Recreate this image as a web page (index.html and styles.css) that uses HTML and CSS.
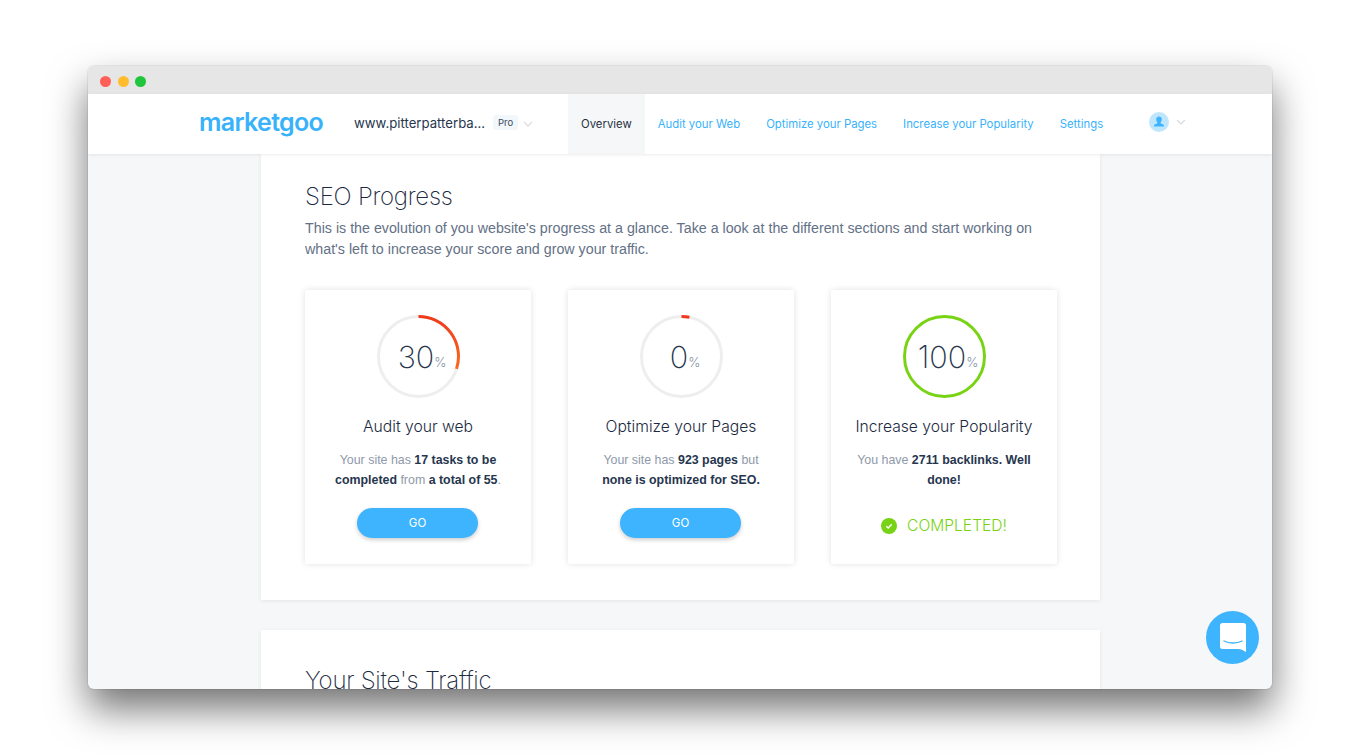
FILE: index.html
```html
<!DOCTYPE html>
<html>
<head>
    <meta charset="utf-8">
    <title>marketgoo</title>
    <link rel="stylesheet" href="styles.css">
</head>
<body>
<div class="window">
    <div class="titlebar">
        <span class="light red"></span>
        <span class="light yellow"></span>
        <span class="light green"></span>
    </div>
    <div class="nav">
        <div class="logo">marketgoo</div>
        <div class="site">www.pitterpatterba...</div>
        <span class="plan">Pro</span>
        <svg class="chev chev-site" viewBox="0 0 10 6"><path d="M1 1l4 4 4-4"/></svg>
        <div class="tabs">
            <a class="tab active">Overview</a>
            <a class="tab">Audit your Web</a>
            <a class="tab">Optimize your Pages</a>
            <a class="tab">Increase your Popularity</a>
            <a class="tab">Settings</a>
        </div>
        <div class="user">
            <svg class="avatar" viewBox="0 0 20 20">
                <circle cx="10" cy="10" r="10" fill="#bfe6fd"/>
                <path fill="#3db4fd" d="M10 4.600c-1.700 0-2.800 1.200-2.800 3 0 1.200.5 2.200 1.200 2.800v.9l-2.600 1.100c-.5.2-.8.7-.8 1.200v.8h10v-.8c0-.5-.3-1-.8-1.200l-2.600-1.100v-.9c.7-.6 1.200-1.600 1.200-2.800 0-1.800-1.100-3-2.800-3z"/>
            </svg>
            <svg class="chev" viewBox="0 0 10 6"><path d="M1 1l4 4 4-4"/></svg>
        </div>
    </div>
    <div class="page">
        <div class="panel">
            <h2>SEO Progress</h2>
            <p class="intro">This is the evolution of you website's progress at a glance. Take a look at the different sections and start working on what's left to increase your score and grow your traffic.</p>
            <div class="cards">
                <div class="card">
                    <div class="ring">
                        <svg viewBox="0 0 84 84">
                            <defs>
                                <linearGradient id="arc" x1="0" y1="0" x2="0" y2="1">
                                    <stop offset="0" stop-color="#ee3a1c"/>
                                    <stop offset="1" stop-color="#fb6a1e"/>
                                </linearGradient>
                            </defs>
                            <circle class="track" cx="42" cy="42" r="40.500"/>
                            <path class="arc" stroke="url(#arc)" d="M42 1.500A40.500 40.500 0 0 1 80.500 54.500"/>
                        </svg>
                        <div class="score">30<small>%</small></div>
                    </div>
                    <h3>Audit your web</h3>
                    <p class="desc">Your site has <b>17 tasks to be completed</b> from <b>a total of 55</b>.</p>
                    <a class="go">GO</a>
                </div>
                <div class="card">
                    <div class="ring">
                        <svg viewBox="0 0 84 84">
                            <circle class="track" cx="42" cy="42" r="40.500"/>
                            <path class="arc" stroke="#ee3a1c" d="M42 1.500A40.500 40.500 0 0 1 50 2.300"/>
                        </svg>
                        <div class="score">0<small>%</small></div>
                    </div>
                    <h3>Optimize your Pages</h3>
                    <p class="desc">Your site has <b>923 pages</b> but <b>none is optimized for SEO.</b></p>
                    <a class="go">GO</a>
                </div>
                <div class="card">
                    <div class="ring">
                        <svg viewBox="0 0 84 84">
                            <circle class="full" cx="42" cy="42" r="40.500"/>
                        </svg>
                        <div class="score">100<small>%</small></div>
                    </div>
                    <h3>Increase your Popularity</h3>
                    <p class="desc">You have <b>2711 backlinks. Well done!</b></p>
                    <div class="done">
                        <svg viewBox="0 0 16 16">
                            <circle cx="8" cy="8" r="8" fill="#77d313"/>
                            <path d="M5.300 8.200l1.900 1.800 3.500-3.700" fill="none" stroke="#fff" stroke-width="1.500"/>
                        </svg>
                        COMPLETED!
                    </div>
                </div>
            </div>
        </div>
        <div class="panel panel-traffic">
            <h2>Your Site's Traffic</h2>
        </div>
    </div>
    <div class="chat">
        <svg viewBox="0 0 26 29">
            <path fill="#fff" d="M2.500 0h21a2.500 2.500 0 0 1 2.500 2.500V29c-2.500-1.500-4.500-3-8-3H2.500A2.500 2.500 0 0 1 0 23.500v-21A2.500 2.500 0 0 1 2.500 0z"/>
            <path fill="none" stroke="#3db4fd" stroke-width="1.400" stroke-linecap="round" d="M4 18c5 2.600 13 2.600 18 0"/>
        </svg>
    </div>
</div>
</body>
</html>
```

FILE: styles.css
```css
*{ padding: 0; margin: 0; box-sizing: border-box; }

html, body
{
    overflow: hidden;
    background: white;
    width: 100%;
    height: 100%;
}

body
{
    padding-top: 66px;
    font-family: "Inter", "Liberation Sans", sans-serif;
}

.window
{
    position: relative;
    width: 1184px;
    height: 623px;
    margin-left: 88px;
    border-radius: 6px;
    overflow: hidden;
    background: #f5f7f9;
    display: flex;
    flex-direction: column;
    box-shadow: 0 0 0 1px rgba(0,0,0,.06), 0 20px 38px rgba(0,0,0,.55);
}

.titlebar
{
    height: 28px;
    flex: none;
    background: #e6e6e6;
    display: flex;
    align-items: center;
    gap: 6.500px;
    padding: 2px 0 0 12px;
}

.light
{
    width: 11px;
    height: 11px;
    border-radius: 50%;
}
.red { background: #ff5f57; }
.yellow { background: #ffbd2e; }
.green { background: #1fc53c; }

.nav
{
    height: 60px;
    flex: none;
    background: white;
    display: flex;
    align-items: center;
    padding-left: 111px;
    box-shadow: 0 1px 3px rgba(0,0,0,.08);
    position: relative;
    z-index: 2;
}

.logo
{
    width: 155px;
    padding-bottom: 5px;
    font-size: 25px;
    font-weight: 600;
    letter-spacing: -.7px;
    color: #37b2fb;
}

.site
{
    width: 139px;
    padding-bottom: 3px;
    font-size: 13.200px;
    color: #26364e;
}

.plan
{
    width: 25px;
    height: 15px;
    margin-bottom: 3px;
    font-size: 9.500px;
    line-height: 15px;
    text-align: center;
    color: #3c4a60;
    background: #f1f7fb;
    border-radius: 3px;
}

.chev
{
    width: 10px;
    height: 6px;
    fill: none;
    stroke: #d5dbe1;
    stroke-width: 1.200;
}
.chev-site { margin-left: 5px; }

.tabs
{
    display: flex;
    align-self: stretch;
    margin-left: 35px;
}

.tab
{
    display: flex;
    align-items: center;
    padding: 0 13px;
    font-size: 11.350px;
    color: #37b2fb;
}
.tab.active
{
    background: #f5f7f9;
    color: #26303f;
}

.user
{
    display: flex;
    align-items: center;
    gap: 7px;
    margin-left: 33px;
    padding-bottom: 4px;
}

.avatar
{
    width: 20px;
    height: 20px;
}

.page
{
    flex: 1;
    min-height: 0;
    overflow: hidden;
    padding: 0 172px 0 173px;
}

.panel
{
    background: white;
    height: 446px;
    padding: 28px 44px 0;
    margin-bottom: 30px;
    box-shadow: 0 1px 4px rgba(0,0,0,.08);
}

.panel-traffic { padding-top: 36px; }

h2
{
    font-size: 24px;
    font-weight: 250;
    letter-spacing: -.25px;
    line-height: 30px;
    color: #1b2a41;
}

.intro
{
    font-family: "Liberation Sans", sans-serif;
    font-size: 14.260px;
    line-height: 21px;
    color: #637186;
    margin-top: 6px;
}

.cards
{
    display: grid;
    grid-template-columns: repeat(3, 226px);
    gap: 37px;
    margin-top: 30px;
}

.card
{
    height: 274px;
    background: white;
    box-shadow: 0 0 6px rgba(0,0,0,.12);
    border-radius: 2px;
    padding-top: 25px;
    display: flex;
    flex-direction: column;
    align-items: center;
}

.ring
{
    position: relative;
    width: 83px;
    height: 83px;
}

.ring svg
{
    display: block;
    width: 83px;
    height: 83px;
    fill: none;
}

.track { stroke: #eeeeee; stroke-width: 3; }
.arc { stroke-width: 3; }
.full { stroke: #77d313; stroke-width: 3; }

.score
{
    position: absolute;
    inset: 0;
    padding-left: 8px;
    display: flex;
    align-items: center;
    justify-content: center;
    font-size: 30.500px;
    font-weight: 200;
    color: #26364e;
}

.score small
{
    font-size: 13px;
    font-weight: 300;
    color: #8794a6;
    margin-top: 10px;
}

h3
{
    font-size: 15.700px;
    font-weight: 350;
    color: #1b2a41;
    margin-top: 19px;
    line-height: 20px;
}

.desc
{
    font-family: "Liberation Sans", sans-serif;
    font-size: 12.400px;
    line-height: 19.500px;
    color: #8e99aa;
    text-align: center;
    width: 180px;
    margin-top: 14px;
}

.desc b { color: #26364e; }

.go
{
    width: 121px;
    height: 30px;
    margin: 18px 1px 0 0;
    border-radius: 15px;
    background: #3db4fd;
    box-shadow: 0 2px 4px rgba(0,0,0,.2);
    color: white;
    font-size: 11.500px;
    display: flex;
    align-items: center;
    justify-content: center;
}

.done
{
    display: flex;
    align-items: center;
    gap: 10px;
    margin-top: 26px;
    font-size: 15.600px;
    font-weight: 300;
    color: #77d313;
}

.done svg
{
    width: 16px;
    height: 16px;
}

.chat
{
    position: absolute;
    right: 13px;
    bottom: 25px;
    width: 53px;
    height: 53px;
    border-radius: 50%;
    background: #3db4fd;
    display: flex;
    align-items: center;
    justify-content: center;
    z-index: 3;
}

.chat svg
{
    width: 26px;
    height: 29px;
}
```
